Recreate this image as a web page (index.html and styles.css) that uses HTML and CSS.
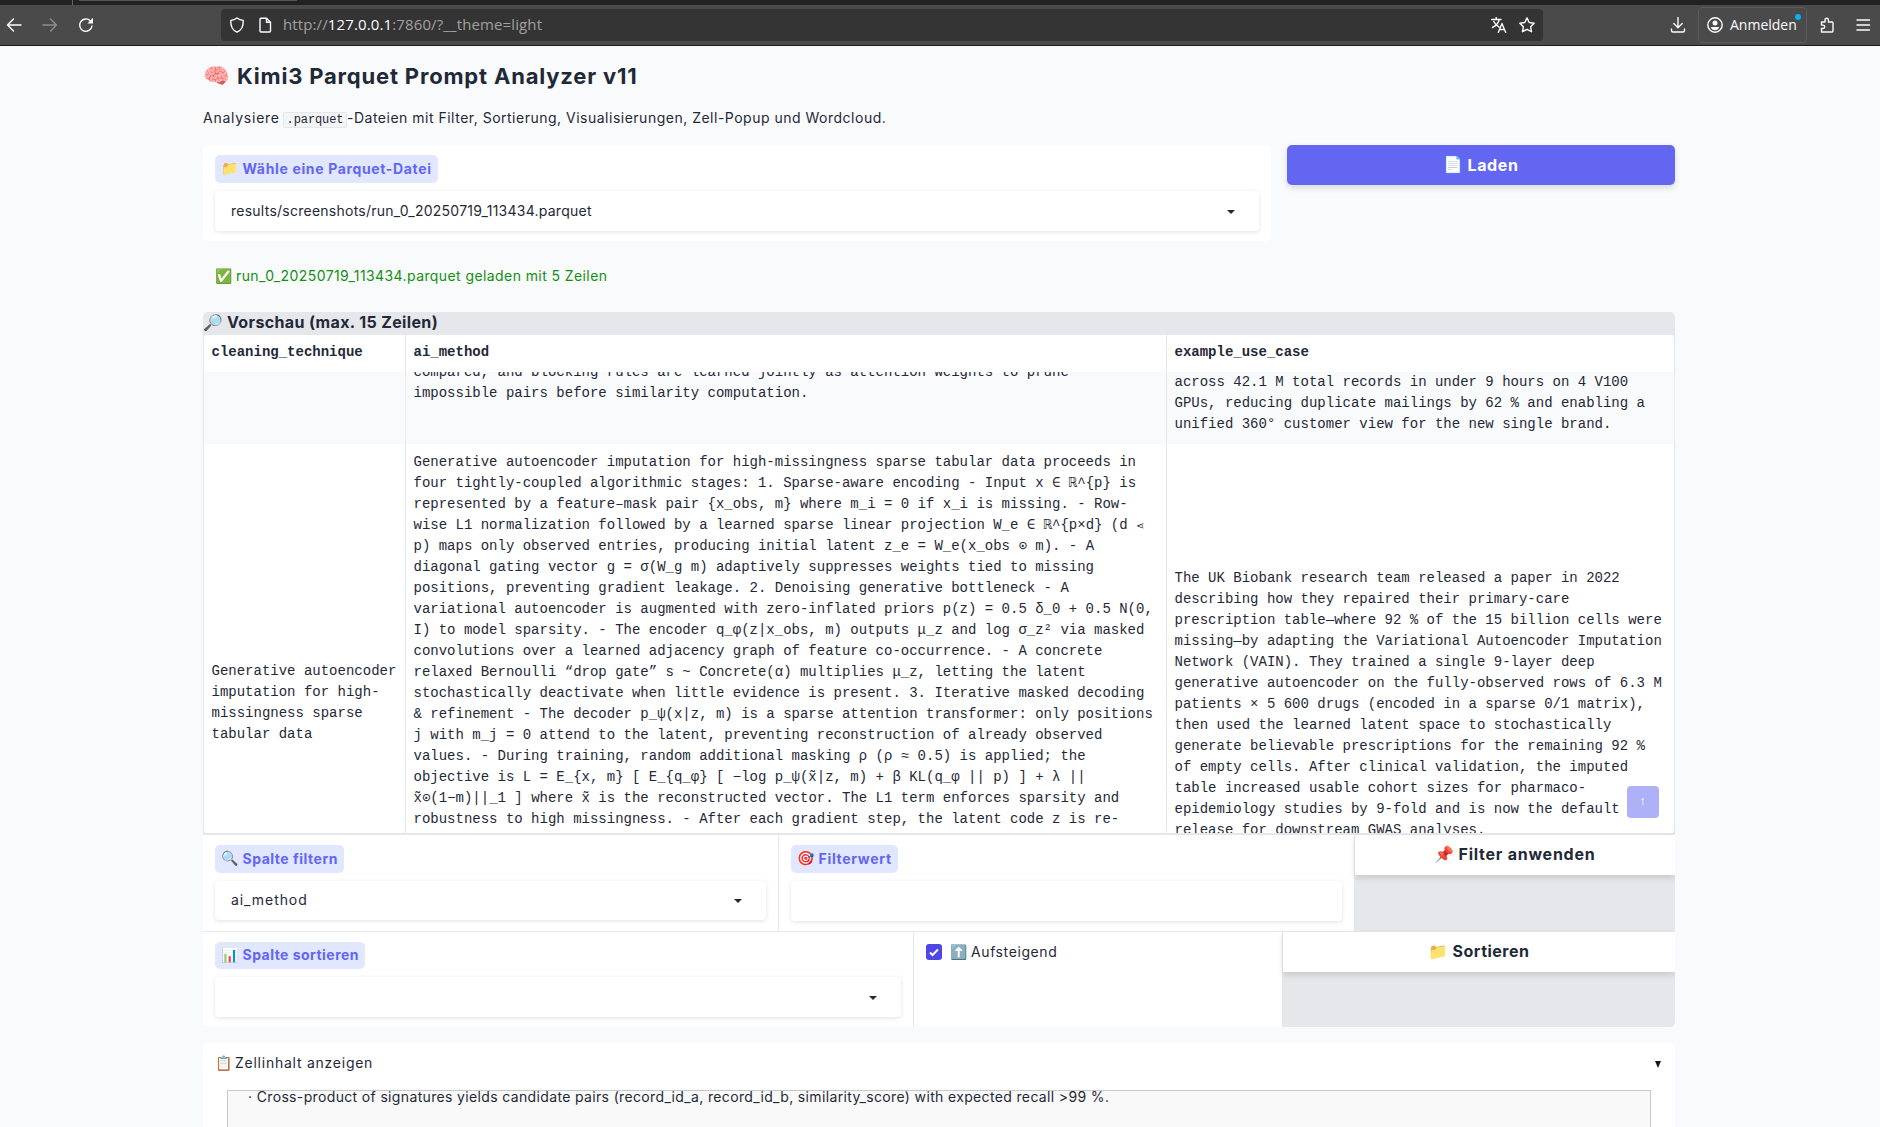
FILE: index.html
```html
<!DOCTYPE html>
<html lang="de">
<head>
<meta charset="utf-8">
<title>Kimi3 Parquet Prompt Analyzer v11</title>
<link rel="stylesheet" href="styles.css">
</head>
<body>
<div class="tabstrip"><span class="tab-edge"></span><span class="tab-active"></span></div>
<div class="toolbar">
  <div class="nav">
    <svg class="ic" viewBox="0 0 16 16"><path d="M15 8H1.5M7.5 2 1.5 8l6 6"/></svg>
    <svg class="ic dim" viewBox="0 0 16 16"><path d="M1 8h13.5M8.500 2l6 6-6 6"/></svg>
    <svg class="ic" viewBox="0 0 16 16"><path d="M14 9a6.200 6.200 0 1 1-1.500-5"/><path class="fill" d="M15 .8v5.700H9.300z"/></svg>
  </div>
  <div class="urlbar">
    <svg class="ic" viewBox="0 0 16 16"><path d="M8 1C10 2.600 12 3.200 14.200 3.400 14.500 9 12 13.500 8 15.200 4 13.500 1.500 9 1.800 3.400 4 3.200 6 2.600 8 1z"/></svg>
    <svg class="ic ic-page" viewBox="0 0 16 16"><path d="M3 2.200q0-1 1-1h5.500l4 4V14q0 1-1 1H4q-1 0-1-1zM9.500 1.200v4h4"/></svg>
    <span class="url">http://<b>127.0.0.1</b>:7860/?__theme=light</span>
    <svg class="ic" viewBox="0 0 16 16"><path d="M.5 2.500h9.500M5.200.500v2M8.200 2.500C7.500 6 4.500 9 1.500 10.500M2.800 4.500C4 7 6 9 8 10M7.300 15.500l3.700-9 3.700 9M8.700 12.500h4.600"/></svg>
    <svg class="ic ic-star" viewBox="0 0 16 16"><path d="m8 .9 2.200 4.600 5 .7-3.600 3.500.9 5L8 12.300l-4.500 2.400.9-5L.8 6.200l5-.7z"/></svg>
  </div>
  <div class="tools">
    <svg class="ic ic-dl" viewBox="0 0 16 16"><path d="M8 .5v10M3.800 6.500 8 10.700l4.200-4.200M1.500 12v1.500q0 1.500 1.500 1.500h10q1.500 0 1.500-1.500V12"/></svg>
    <div class="account">
      <svg class="ic" viewBox="0 0 16 16"><circle cx="8" cy="8" r="7.200"/><circle class="fill" cx="8" cy="6" r="2.500"/><path class="fill" d="M3.800 10h8.400q-1 3.200-4.200 3.200T3.800 10z"/></svg>
      <span>Anmelden</span><i class="dot"></i>
    </div>
    <svg class="ic ic-ext" viewBox="0 0 16 16"><path d="M2.500 15V11.500H4a1.700 1.700 0 0 0 0-3.400H2.500V5H6V3a1.700 1.700 0 0 1 3.400 0v2H13q1 0 1 1v8q0 1-1 1z"/></svg>
    <svg class="ic" viewBox="0 0 16 16"><path d="M2 3h12.500M2 8h12.500M2 13h12.500"/></svg>
  </div>
</div>

<main class="page">
  <h1 class="title"><span class="emo">🧠</span><span>Kimi3 Parquet Prompt Analyzer v11</span></h1>
  <p class="intro"><span class="intro-a">Analysiere</span><code>.parquet</code><span class="intro-b">-Dateien mit Filter, Sortierung, Visualisierungen, Zell-Popup und Wordcloud.</span></p>

  <div class="load-row">
    <section class="panel field">
      <div class="pill"><span class="emo">📁</span><span class="t-file">Wähle eine Parquet-Datei</span></div>
      <div class="input"><span class="t-path">results/screenshots/run_0_20250719_113434.parquet</span><i class="caret"></i></div>
    </section>
    <div class="btn primary"><span class="emo">📄</span><span class="t-load">Laden</span></div>
  </div>

  <div class="status"><span class="emo">✅</span><span>run_0_20250719_113434.parquet geladen mit 5 Zeilen</span></div>

  <section class="group">
    <h3 class="group-title"><span class="emo">🔎</span><span>Vorschau (max. 15 Zeilen)</span></h3>
    <div class="table">
      <div class="tr head"><div>cleaning_technique</div><div>ai_method</div><div>example_use_case</div></div>
      <div class="tr first">
        <div></div>
        <div><p class="c-method">compared, and blocking rules are learned jointly as attention weights to prune<br>impossible pairs before similarity computation.</p></div>
        <div><p class="c-use">across 42.1 M total records in under 9 hours on 4 V100<br>GPUs, reducing duplicate mailings by 62 % and enabling a<br>unified 360° customer view for the new single brand.</p></div>
      </div>
      <div class="tr second">
        <div class="c-tech">Generative autoencoder<br>imputation for high-<br>missingness sparse<br>tabular data</div>
        <div class="c-method">Generative autoencoder imputation for high-missingness sparse tabular data proceeds in<br>four tightly-coupled algorithmic stages: 1. Sparse-aware encoding - Input x ∈ ℝ^{p} is<br>represented by a feature–mask pair {x_obs, m} where m_i = 0 if x_i is missing. - Row-<br>wise L1 normalization followed by a learned sparse linear projection W_e ∈ ℝ^{p×d} (d <span class="lt">⋖</span><br>p) maps only observed entries, producing initial latent z_e = W_e(x_obs ⊙ m). - A<br>diagonal gating vector g = σ(W_g m) adaptively suppresses weights tied to missing<br>positions, preventing gradient leakage. 2. Denoising generative bottleneck - A<br>variational autoencoder is augmented with zero-inflated priors p(z) = 0.5 δ_0 + 0.5 N(0,<br>I) to model sparsity. - The encoder q_φ(z|x_obs, m) outputs μ_z and log σ_z² via masked<br>convolutions over a learned adjacency graph of feature co-occurrence. - A concrete<br>relaxed Bernoulli “drop gate” s ~ Concrete(α) multiplies μ_z, letting the latent<br>stochastically deactivate when little evidence is present. 3. Iterative masked decoding<br>&amp; refinement - The decoder p_ψ(x|z, m) is a sparse attention transformer: only positions<br>j with m_j = 0 attend to the latent, preventing reconstruction of already observed<br>values. - During training, random additional masking ρ (ρ ≈ 0.5) is applied; the<br>objective is L = E_{x, m} [ E_{q_φ} [ −log p_ψ(x̃|z, m) + β KL(q_φ || p) ] + λ ||<br>x̃⊙(1−m)||_1 ] where x̃ is the reconstructed vector. The L1 term enforces sparsity and<br>robustness to high missingness. - After each gradient step, the latent code z is re-</div>
        <div class="c-use">The UK Biobank research team released a paper in 2022<br>describing how they repaired their primary-care<br>prescription table—where 92 % of the 15 billion cells were<br>missing—by adapting the Variational Autoencoder Imputation<br>Network (VAIN). They trained a single 9-layer deep<br>generative autoencoder on the fully-observed rows of 6.3 M<br>patients × 5 600 drugs (encoded in a sparse 0/1 matrix),<br>then used the learned latent space to stochastically<br>generate believable prescriptions for the remaining 92 %<br>of empty cells. After clinical validation, the imputed<br>table increased usable cohort sizes for pharmaco-<br>epidemiology studies by 9-fold and is now the default<br>release for downstream GWAS analyses.</div>
      </div>
      <div class="scroll-top">↑</div>
    </div>

    <div class="filter-row">
      <div class="field"><div class="pill"><span class="emo">🔍</span><span class="t-filter">Spalte filtern</span></div><div class="input short"><span class="t-col">ai_method</span><i class="caret"></i></div></div>
      <div class="field"><div class="pill"><span class="emo">🎯</span><span class="t-value">Filterwert</span></div><div class="input"></div></div>
      <div class="side"><div class="btn"><span class="emo">📌</span><span class="t-apply">Filter anwenden</span></div></div>
    </div>
    <div class="sort-row">
      <div class="field"><div class="pill low"><span class="emo">📊</span><span class="t-sort">Spalte sortieren</span></div><div class="input"><i class="caret"></i></div></div>
      <div class="check"><span class="box"><svg viewBox="0 0 16 16"><path d="m4 8.500 2.500 2.500L12 5.500"/></svg></span><span class="emo">⬆️</span><span class="t-asc">Aufsteigend</span></div>
      <div class="side"><div class="btn"><span class="emo">📁</span><span class="t-dosort">Sortieren</span></div></div>
    </div>
  </section>

  <section class="panel accordion">
    <div class="acc-head"><span class="emo">📋</span><span class="t-cell">Zellinhalt anzeigen</span><i class="tri"></i></div>
    <div class="cell-view"><span>· Cross-product of signatures yields candidate pairs (record_id_a, record_id_b, similarity_score) with expected recall &gt;99 %.</span></div>
  </section>
</main>
</body>
</html>
```
FILE: styles.css
```css
* { box-sizing: border-box; }
body {
  margin: 0;
  height: 1127px;
  overflow: hidden;
  background: #f9fafc;
  color: #1f2937;
  font-family: Inter, sans-serif;
  font-size: 14px;
}
.emo { font-family: "Noto Color Emoji", sans-serif; font-weight: 400; display: inline-block; flex: none; letter-spacing: 0; }

/* browser chrome */
.tabstrip { height: 5px; background: #222; display: flex; }
.tab-edge { width: 73px; border-right: 1px solid #666; }
.tab-active { width: 218px; height: 1px; margin-left: 6px; background: #555; }
.toolbar { height: 41px; background: #4a4a4a; border-bottom: 1px solid #1c1c1c; display: flex; align-items: center; }
.ic { width: 16px; height: 16px; fill: none; stroke: #fbfbfe; stroke-width: 1.4; stroke-linecap: round; stroke-linejoin: round; flex: none; }
.ic .fill { fill: #fbfbfe; stroke: none; }
.ic.dim { stroke: #8f8f8f; }
.nav { width: 221px; padding-left: 6px; display: flex; gap: 20px; }
.urlbar { width: 1322px; height: 32px; background: #343434; border-radius: 4px; display: flex; align-items: center; padding: 0 8px; flex: none; }
.ic-page { margin-left: 12px; }
.url { flex: 1; margin-left: 10px; padding-bottom: 2px; font: 15px "Open Sans", sans-serif; letter-spacing: .12px; color: #a0a0a0; }
.url b { font-weight: 400; color: #fbfbfe; }
.ic-star { margin-left: 12px; }
.tools { flex: 1; display: flex; align-items: center; padding-left: 127px; }
.account { position: relative; width: 109px; height: 36px; margin: 0 12px; border: 1px solid #5c5c5c; border-radius: 4px; display: flex; align-items: center; gap: 7px; padding: 0 0 1px 8px; color: #fbfbfe; font: 14px "Open Sans", sans-serif; }
.dot { position: absolute; right: 5px; top: 6px; width: 6px; height: 6px; border-radius: 50%; background: #00b3f4; }
.ic-ext { margin-right: 20px; }

/* page */
.page { width: 1472px; margin-left: 203px; }
.title { margin: 0; padding-top: 14px; height: 57px; display: flex; font-size: 22px; line-height: 32px; letter-spacing: .81px; }
.title .emo { width: 34px; font-size: 21.500px; }
.intro { margin: 0; height: 42px; display: flex; line-height: 30px; }
.intro-a { width: 80px; letter-spacing: .75px; }
.intro-b { letter-spacing: .5px; }
.intro code { width: 64px; height: 16px; margin-top: 9px; border: 1px solid #e5e7eb; border-radius: 2px; background: #f3f4f6; font: 12px/14px "Liberation Mono", monospace; text-align: center; letter-spacing: -.1px; }

.panel { background: #fff; border-radius: 5px; }
.load-row { display: flex; gap: 16px; align-items: flex-start; }
.load-row .panel { width: 1068px; height: 96px; }
.load-row .btn { flex: 1; }
.field { padding: 10px 12px; background: #fff; }
.pill { display: inline-flex; align-items: center; height: 28px; padding: 0 6px 2px; margin-bottom: 8px; border-radius: 5px; background: #e0e7ff; color: #6366f1; font-weight: 700; vertical-align: top; }
.pill .emo { width: 21.500px; font-size: 14px; }
.input { height: 40px; border-radius: 4px; background: #fff; box-shadow: 0 1px 4px rgba(0, 0, 0, .12); display: flex; align-items: center; padding: 0 16px 2px; }
.input.short { height: 39px; }
.caret { margin: 3px 8px 0 auto; border: 4px solid transparent; border-top: 4px solid #1f2937; border-bottom: 0; }
.btn { height: 40px; display: flex; align-items: center; justify-content: center; padding-bottom: 2px; font-weight: 700; font-size: 16px; background: #fff; box-shadow: 0 3px 6px rgba(0, 0, 0, .13); }
.btn .emo { width: 24px; font-size: 16px; }
.primary { background: #6366f1; color: #fff; border-radius: 5px; padding-bottom: 1px; }

.status { height: 71px; padding: 0 0 1px 12px; display: flex; align-items: center; color: #129012; letter-spacing: .41px; line-height: 20px; }
.status .emo { width: 21px; font-size: 14px; }

.group { background: #e5e7eb; border-radius: 5px; overflow: hidden; height: 715px; }
.group-title { margin: 0; height: 23px; padding-bottom: 3px; display: flex; align-items: center; font-size: 16px; letter-spacing: .36px; }
.group-title .emo { width: 24px; font-size: 16px; }

.table { position: relative; height: 499px; margin-bottom: 1px; background: #fff; border: 1px solid #e5e7eb; border-top: 0; border-radius: 3px; overflow: hidden; font: 14px/21px "Liberation Mono", "DejaVu Sans Mono", monospace; white-space: nowrap; }
.tr { display: grid; grid-template-columns: 201px 761px 1fr; }
.tr > div { padding-left: 7.500px; overflow: hidden; }
.tr > div + div { border-left: 1px solid #e5e7eb; }
.head { height: 37px; font-weight: 700; }
.head > div { padding-top: 7px; }
.first { height: 72px; background: #f9fafb; }
.first > div { height: 72px; }
.first p { margin: 0; }
.first .c-method { margin-top: -10px; }
.second { height: 389px; }
.second .c-tech { padding-top: 217px; }
.second .c-method { padding-top: 8px; }
.second .c-use { padding-top: 124px; }
.lt { font-size: 10px; line-height: 1; }
.scroll-top { position: absolute; right: 15px; bottom: 15px; width: 32px; height: 32px; border-radius: 4px; background: #afb1f8; color: #fff; font-size: 13px; line-height: 32px; text-align: center; }

.filter-row { display: grid; grid-template-columns: 575px 575px 1fr; gap: 1px; height: 96px; margin-bottom: 1px; }
.sort-row { display: grid; grid-template-columns: 710px 368px 1fr; gap: 1px; height: 95px; }
.pill.low { height: 27px; }
.check { background: #fff; display: flex; padding: 10px 12px; line-height: 20px; }
.check .emo { width: 21px; margin-left: 8px; font-size: 14px; }
.box { width: 16px; height: 16px; margin-top: 2px; border-radius: 3px; background: #4f46e5; }
.box svg { display: block; fill: none; stroke: #fff; stroke-width: 2; }

.accordion { margin-top: 16px; height: 100px; padding: 0 24px; }
.acc-head { height: 47px; margin: 0 -24px; padding: 0 14px 8px 12px; display: flex; align-items: center; }
.acc-head .emo { width: 20px; font-size: 14px; }
.tri { margin: 3px 0 0 auto; border: 3.500px solid transparent; border-top: 7px solid #111827; border-bottom: 0; }
.cell-view { height: 60px; border: 1px solid #c8c8c8; background: #f9f9f9; overflow: hidden; padding-left: 20px; letter-spacing: .35px; line-height: 20px; }
.cell-view span { display: block; margin-top: -4px; white-space: nowrap; }

.t-file { letter-spacing: .65px; }
.t-path { letter-spacing: .25px; }
.t-load { letter-spacing: .6px; }
.t-filter { letter-spacing: .52px; }
.t-value { letter-spacing: .7px; }
.t-sort { letter-spacing: .47px; }
.t-col { letter-spacing: .92px; }
.t-asc { letter-spacing: .6px; }
.t-apply { letter-spacing: .76px; }
.t-dosort { letter-spacing: .5px; }
.t-cell { letter-spacing: .75px; }
```
